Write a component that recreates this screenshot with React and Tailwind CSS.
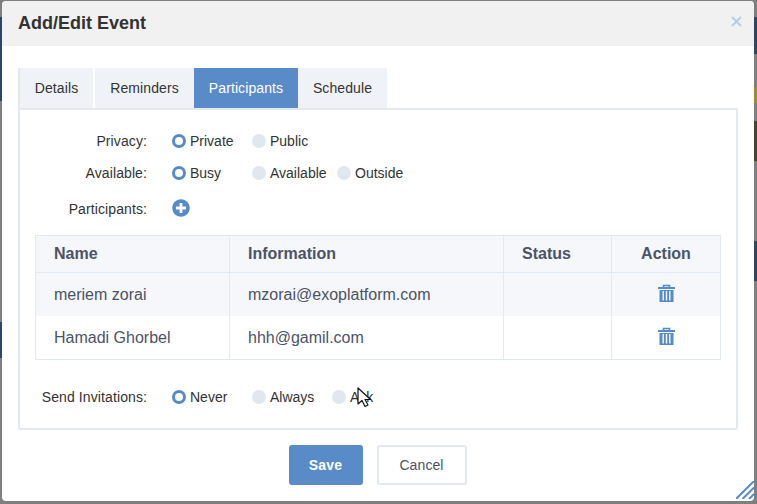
import { FaPlusCircle } from 'react-icons/fa';

const tabs = [
  { label: 'Details', width: 'w-[73px]', divider: true },
  { label: 'Reminders', width: 'w-[99px]', divider: false },
  { label: 'Participants', width: 'w-[104px]', active: true },
  { label: 'Schedule', width: 'w-[89px]' },
];

const people = [
  { name: 'meriem zorai', info: 'mzorai@exoplatform.com', rowClass: 'h-[43px] bg-[#f5f7fa]' },
  { name: 'Hamadi Ghorbel', info: 'hhh@gamil.com', rowClass: 'h-[44px] bg-white' },
];

function Radio({ checked, label, className }) {
  return (
    <div className={`flex items-center ${className}`}>
      {checked ? (
        <span className="h-[14px] w-[14px] rounded-full border-[3px] border-[#568bca] bg-white" />
      ) : (
        <span className="h-[14px] w-[14px] rounded-full bg-[#e1e7ee]" />
      )}
      <span className="ml-[4px] text-[14px] leading-[20px] text-[#333]">{label}</span>
    </div>
  );
}

function Label({ children }) {
  return <div className="w-[112px] shrink-0 text-right text-[14px] leading-[20px] tracking-[0.1px] text-[#333] whitespace-nowrap">{children}</div>;
}

function TrashIcon() {
  return (
    <svg width="17" height="18" viewBox="0 0 17 18" className="mx-auto block">
      <path d="M5.5 3V1.5h6V3" fill="none" stroke="#568bca" strokeWidth="1.6" />
      <rect x="0" y="3" width="17" height="2" fill="#568bca" />
      <path
        fillRule="evenodd"
        d="M1.5 6h14v12h-14zM4.5 7v9.5h1.4V7zM7.8 7v9.5h1.4V7zM11.1 7v9.5h1.4V7z"
        fill="#568bca"
      />
    </svg>
  );
}

export default function App() {
  return (
    <div className="relative h-[504px] w-[757px] overflow-hidden bg-[#7f7f7f] font-['Liberation_Sans',Arial,sans-serif]">
      {/* page dimmed behind the dialog */}
      <div className="absolute left-0 top-[17px] h-[84px] w-[2px] bg-[#2b4666]" />
      <div className="absolute left-0 top-[322px] h-[36px] w-[2px] bg-[#2b4666]" />
      <div className="absolute right-0 top-[17px] h-[37px] w-[3px] bg-[#2b4666]" />
      <div className="absolute right-0 top-[87px] h-[16px] w-[3px] bg-[#a08a2c]" />
      <div className="absolute right-0 top-[121px] h-[40px] w-[3px] bg-[#45462a]" />
      <div className="absolute right-0 top-[241px] h-[40px] w-[3px] bg-[#2b4666]" />

      <div className="relative ml-[2px] mt-[1px] flex h-[500px] w-[752px] flex-col overflow-hidden rounded-[4px] bg-white">
        <div className="flex h-[45px] shrink-0 items-center justify-between bg-[#f1f1f1] pl-[16px] pr-[12px]">
          <h1 className="text-[18px] font-bold text-[#333]">Add/Edit Event</h1>
          <svg width="11" height="11" viewBox="0 0 11 11" className="mb-[5px]">
            <path d="M1 1l9 9M10 1l-9 9" stroke="#b4cde9" strokeWidth="2" />
          </svg>
        </div>

        <div className="ml-[16px] mt-[22px] w-[720px]">
          <div className="flex h-[40px] border-l-2 border-[#e3e9f0]">
            {tabs.map((tab) => (
              <div
                key={tab.label}
                className={`flex items-center justify-center text-[14px] tracking-[0.1px] ${tab.width} ${
                  tab.active ? 'bg-[#598bc9] text-white' : 'bg-[#eff3f7] text-[#333]'
                } ${tab.divider ? 'mr-[2px]' : ''}`}
              >
                {tab.label}
              </div>
            ))}
          </div>

          <div className="h-[322px] rounded-b-[2px] border-2 border-[#e3e9f0] px-[15px] pt-[21px]">
            <div className="flex h-[20px] items-center">
              <Label>Privacy:</Label>
              <Radio checked label="Private" className="ml-[25px] w-[80px]" />
              <Radio label="Public" />
            </div>
            <div className="mt-[12px] flex h-[20px] items-center">
              <Label>Available:</Label>
              <Radio checked label="Busy" className="ml-[25px] w-[80px]" />
              <Radio label="Available" className="w-[85px]" />
              <Radio label="Outside" />
            </div>
            <div className="mt-[16px] flex h-[20px] items-center">
              <Label>Participants:</Label>
              <FaPlusCircle className="ml-[25px] mb-[2px] text-[#568bca]" size={18} />
            </div>

            <table className="mt-[16px] w-[685px] table-fixed border-collapse border border-[#e3e9f0] text-[16px] text-[#4c5366]">
              <colgroup>
                <col className="w-[194px]" />
                <col className="w-[274px]" />
                <col className="w-[108px]" />
                <col className="w-[109px]" />
              </colgroup>
              <thead>
                <tr className="h-[37px] bg-[#f5f7fa] font-bold">
                  <th className="border border-[#e3e9f0] pl-[18px] text-left">Name</th>
                  <th className="border border-[#e3e9f0] pl-[18px] text-left">Information</th>
                  <th className="border border-[#e3e9f0] pl-[18px] text-left">Status</th>
                  <th className="border border-[#e3e9f0] text-center">Action</th>
                </tr>
              </thead>
              <tbody>
                {people.map((person) => (
                  <tr key={person.name} className={person.rowClass}>
                    <td className="border-x border-[#e3e9f0] pl-[18px] pt-[2px]">{person.name}</td>
                    <td className="border-x border-[#e3e9f0] pl-[18px] pt-[2px]">{person.info}</td>
                    <td className="border-x border-[#e3e9f0]" />
                    <td className="border-x border-[#e3e9f0] pb-[3px]">
                      <TrashIcon />
                    </td>
                  </tr>
                ))}
              </tbody>
            </table>

            <div className="relative mt-[27px] flex h-[20px] items-center">
              <Label>Send Invitations:</Label>
              <Radio checked label="Never" className="ml-[25px] w-[80px]" />
              <Radio label="Always" className="w-[80px]" />
              <Radio label="Ask" />
              {/* mouse pointer caught in the screenshot */}
              <svg width="17" height="21" viewBox="0 0 17 21" className="absolute left-[322px] top-0">
                <path d="M1 1v16l4-3.5 3 6 3-1.5-3-5.5h5.5z" fill="#fff" stroke="#111" strokeWidth="1.2" strokeLinejoin="round" />
              </svg>
            </div>
          </div>

          <div className="mt-[15px] flex justify-center gap-[14px] pr-[1px]">
            <button className="h-[40px] w-[74px] rounded-[3px] bg-[#598bc9] text-[14px] font-bold tracking-[0.2px] text-white">Save</button>
            <button className="h-[40px] w-[90px] rounded-[3px] border-2 border-[#e3e9f0] bg-white text-[14px] tracking-[0.1px] text-[#4c5366]">Cancel</button>
          </div>
        </div>

        {/* resize grip */}
        <svg width="18" height="18" viewBox="0 0 18 18" className="absolute bottom-[2px] right-0">
          <path d="M0 18L18 0M6.5 18L18 6.5M13 18l5-5" stroke="#568bca" strokeWidth="2" />
        </svg>
      </div>
    </div>
  );
}
